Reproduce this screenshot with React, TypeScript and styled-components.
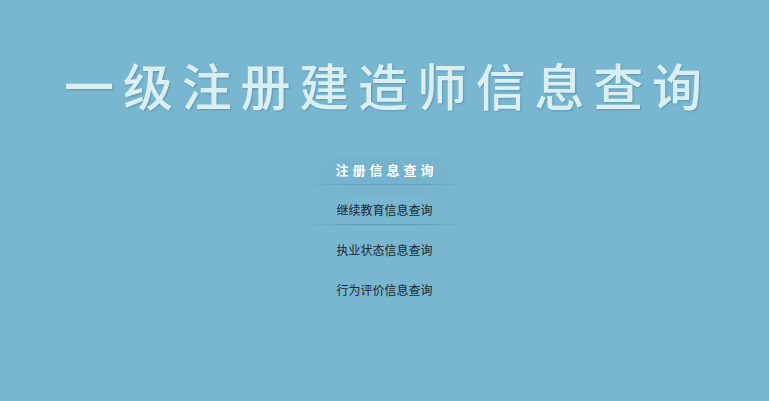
import React from "react";
import styled, { createGlobalStyle } from "styled-components";

const GlobalStyle = createGlobalStyle`
  html, body {
    margin: 0;
    padding: 0;
    background: #79b6d0;
  }
  body {
    font-family: "Noto Sans CJK SC", "Noto Sans", sans-serif;
  }
`;

const Page = styled.div`
  width: 769px;
  height: 401px;
  background: #79b6d0;
  display: flex;
  flex-direction: column;
  align-items: center;
  overflow: hidden;
`;

const Title = styled.h1`
  margin: 54px 0 0 0;
  padding-left: 6px;
  height: 60px;
  line-height: 60px;
  font-family: "Noto Sans CJK SC", sans-serif;
  font-size: 50px;
  font-weight: 500;
  letter-spacing: 8.8px;
  color: #d9eff2;
  text-shadow: 1px 1px 2px rgba(30, 80, 110, 0.3);
  white-space: nowrap;
`;

const Menu = styled.nav`
  margin-top: 42px;
  display: flex;
  flex-direction: column;
  align-items: center;
`;

const Item = styled.a<{ $active?: boolean }>`
  width: 150px;
  height: 40px;
  display: flex;
  flex-direction: column;
  align-items: center;
  text-decoration: none;
  cursor: pointer;
  background: ${(p) =>
    p.$active
      ? "radial-gradient(ellipse 65% 80% at 50% 45%, rgba(100, 165, 195, 0.28), rgba(100, 165, 195, 0) 100%)"
      : "transparent"};
`;

const Label = styled.span<{ $active?: boolean }>`
  height: 28px;
  line-height: 28px;
  font-size: ${(p) => (p.$active ? "13px" : "12px")};
  font-weight: ${(p) => (p.$active ? 700 : 400)};
  letter-spacing: ${(p) => (p.$active ? "4px" : "0")};
  padding-left: ${(p) => (p.$active ? "4px" : "0")};
  color: ${(p) => (p.$active ? "#ffffff" : "#1a2733")};
  white-space: nowrap;
`;

const Separator = styled.div<{ $show?: boolean }>`
  width: 160px;
  height: 3px;
  visibility: ${(p) => (p.$show ? "visible" : "hidden")};
  background:
    linear-gradient(to right, rgba(121, 182, 208, 1) 0%, rgba(121, 182, 208, 0) 30%, rgba(121, 182, 208, 0) 70%, rgba(121, 182, 208, 1) 100%),
    linear-gradient(to bottom, #62a3c1 0px, #62a3c1 1px, #72b0cb 2px, #98cadf 3px);
`;

const items = [
  { label: "注册信息查询", active: true, sep: true },
  { label: "继续教育信息查询", active: false, sep: true },
  { label: "执业状态信息查询", active: false, sep: false },
  { label: "行为评价信息查询", active: false, sep: false },
];

export default function App() {
  return (
    <>
      <GlobalStyle />
      <Page>
        <Title>一级注册建造师信息查询</Title>
        <Menu>
          {items.map((it) => (
            <Item key={it.label} $active={it.active}>
              <Label $active={it.active}>{it.label}</Label>
              <Separator $show={it.sep} />
            </Item>
          ))}
        </Menu>
      </Page>
    </>
  );
}
